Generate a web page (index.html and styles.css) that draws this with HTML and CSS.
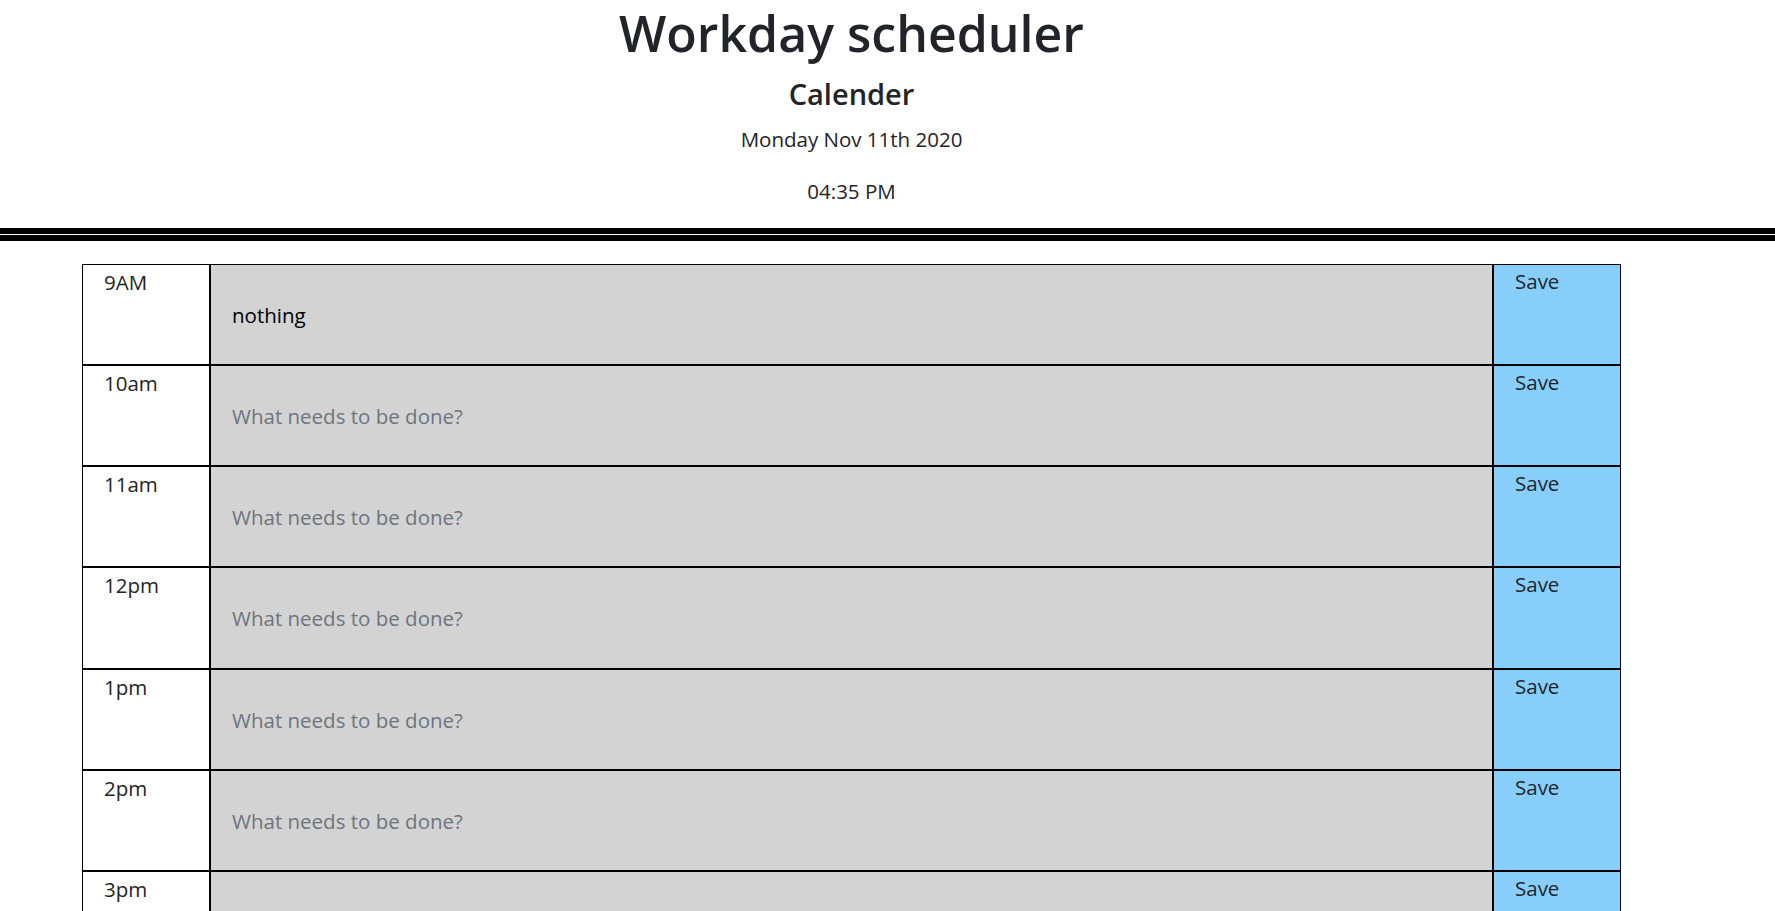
FILE: index.html
```html
<!DOCTYPE html>
<html lang="en">
<head>
<meta charset="utf-8">
<title>Workday scheduler</title>
<link rel="stylesheet" href="styles.css">
</head>
<body>
<header class="jumbotron">
  <div class="page">
    <h1 class="title">Workday scheduler</h1>
    <h2 class="subtitle">Calender</h2>
    <p class="lead date">Monday Nov 11th 2020</p>
    <p class="lead clock">04:35 PM</p>
  </div>
</header>
<div class="rule"></div>
<div class="page">
  <main class="schedule">
    <div class="time-block"><div class="hour">9AM</div><textarea class="description" placeholder="What needs to be done?">nothing</textarea><button class="save-btn">Save</button></div>
    <div class="time-block"><div class="hour">10am</div><textarea class="description" placeholder="What needs to be done?"></textarea><button class="save-btn">Save</button></div>
    <div class="time-block"><div class="hour">11am</div><textarea class="description" placeholder="What needs to be done?"></textarea><button class="save-btn">Save</button></div>
    <div class="time-block"><div class="hour">12pm</div><textarea class="description" placeholder="What needs to be done?"></textarea><button class="save-btn">Save</button></div>
    <div class="time-block"><div class="hour">1pm</div><textarea class="description" placeholder="What needs to be done?"></textarea><button class="save-btn">Save</button></div>
    <div class="time-block"><div class="hour">2pm</div><textarea class="description" placeholder="What needs to be done?"></textarea><button class="save-btn">Save</button></div>
    <div class="time-block"><div class="hour">3pm</div><textarea class="description" placeholder="What needs to be done?"></textarea><button class="save-btn">Save</button></div>
    <div class="time-block"><div class="hour">4pm</div><textarea class="description" placeholder="What needs to be done?"></textarea><button class="save-btn">Save</button></div>
    <div class="time-block"><div class="hour">5pm</div><textarea class="description" placeholder="What needs to be done?"></textarea><button class="save-btn">Save</button></div>
  </main>
</div>
</body>
</html>
```

FILE: styles.css
```css
html, body {
  margin: 0;
  padding: 0;
  background: #fff;
}

body {
  font-family: "Open Sans", "Noto Sans", sans-serif;
  font-size: 20.5px;
  line-height: 1.5;
  color: #212529;
}

.page {
  width: 1703px;
}

.jumbotron {
  padding: 3px 0 21.5px;
  border-bottom: 6px solid #000;
  text-align: center;
}

.title {
  margin: 0;
  font-size: 50px;
  font-weight: 600;
  line-height: 61.5px;
}

.subtitle {
  margin: 12px 0 0;
  font-size: 29px;
  font-weight: 600;
  line-height: 1.2;
}

.lead {
  margin: 0;
  font-size: 20.5px;
  font-weight: 400;
  line-height: 1.5;
}

.date {
  margin-top: 13px;
}

.clock {
  margin-top: 21px;
}

.rule {
  margin-top: 1px;
  height: 6px;
  background: #000;
}

.schedule {
  width: 1539px;
  margin: 22.5px auto 0;
  display: flex;
  flex-direction: column;
}

.time-block {
  display: flex;
  height: 101.2px;
}

.hour {
  box-sizing: border-box;
  width: 128px;
  flex: none;
  border: 1px solid #000;
  padding: 2px 0 0 21px;
  background: #fff;
}

.description {
  box-sizing: border-box;
  flex: 1;
  min-width: 0;
  height: 100%;
  margin: 0;
  border: 1px solid #000;
  border-radius: 0;
  padding: 35px 21px 0;
  background: #d3d3d3;
  font-family: inherit;
  font-size: 20.5px;
  line-height: 1.5;
  color: #000;
  resize: none;
  outline: none;
  overflow: hidden;
}

.description::placeholder {
  color: #6c757d;
  opacity: 1;
}

.save-btn {
  box-sizing: border-box;
  width: 128px;
  flex: none;
  height: 100%;
  margin: 0;
  border: 1px solid #000;
  border-radius: 0;
  padding: 1px 0 0 21px;
  background: #87cefa;
  font-family: inherit;
  font-size: 20.5px;
  line-height: 1.5;
  color: #212529;
  display: flex;
  align-items: flex-start;
  justify-content: flex-start;
  text-align: left;
  cursor: pointer;
}
```
